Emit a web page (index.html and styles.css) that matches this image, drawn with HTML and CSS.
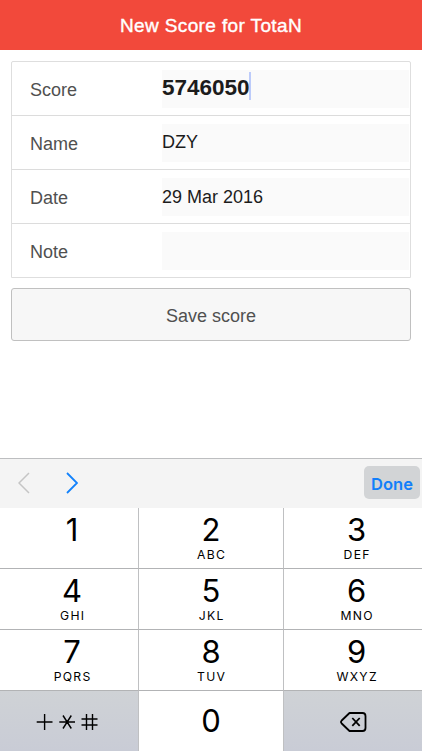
FILE: index.html
```html
<!DOCTYPE html>
<html lang="en">
<head>
<meta charset="utf-8">
<title>New Score for TotaN</title>
<link rel="stylesheet" href="styles.css">
</head>
<body>
<header class="header"><h1>New Score for TotaN</h1></header>
<main class="content">
  <div class="form">
    <div class="row"><span class="label">Score</span><div class="field score"><span>5746050</span><i class="caret"></i></div></div>
    <div class="row"><span class="label">Name</span><div class="field name">DZY</div></div>
    <div class="row"><span class="label">Date</span><div class="field">29 Mar 2016</div></div>
    <div class="row"><span class="label">Note</span><div class="field"></div></div>
  </div>
  <button class="save">Save score</button>
</main>
<section class="keyboard">
  <div class="toolbar">
    <svg class="prev" width="12" height="22" viewBox="0 0 12 22"><path d="M11 1L1 11L11 21"/></svg>
    <svg class="next" width="12" height="22" viewBox="0 0 12 22"><path d="M1 1L11 11L1 21"/></svg>
    <button class="done">Done</button>
  </div>
  <div class="keys">
    <div class="key"><b>1</b></div>
    <div class="key"><b>2</b><small>ABC</small></div>
    <div class="key"><b>3</b><small>DEF</small></div>
    <div class="key"><b>4</b><small>GHI</small></div>
    <div class="key"><b>5</b><small>JKL</small></div>
    <div class="key"><b>6</b><small>MNO</small></div>
    <div class="key"><b>7</b><small>PQRS</small></div>
    <div class="key"><b>8</b><small>TUV</small></div>
    <div class="key"><b>9</b><small>WXYZ</small></div>
    <div class="key gray symbols">
      <svg width="62" height="18" viewBox="0 0 62 18"><path d="M.7 9H16.500M8.600 1V17M23.300 9H39M27 2.500L35.300 15.500M35.300 2.500L27 15.500M45.500 6H61.500M45.500 12H61.500M50.500 1V17M56.500 1V17"/></svg>
    </div>
    <div class="key zero"><b>0</b></div>
    <div class="key gray erase">
      <svg width="27" height="20" viewBox="0 0 27 20"><path d="M9.500 1H22.500Q25.500 1 25.500 4V16Q25.500 19 22.500 19H9.500L1.700 11.500Q.3 10 1.700 8.500ZM12.300 6L19.700 13.800M19.700 6L12.300 13.800"/></svg>
    </div>
  </div>
</section>
</body>
</html>
```
FILE: styles.css
```css
* { box-sizing: border-box; }
body {
  margin: 0;
  height: 751px;
  display: flex;
  flex-direction: column;
  overflow: hidden;
  background: #fff;
  font-family: "Liberation Sans", Arial, sans-serif;
  font-size: 18px;
}
.header {
  height: 50px;
  display: flex;
  justify-content: center;
  background: #f2493b;
  color: #fff;
}
.header h1 {
  margin: 0;
  font-size: 19px;
  line-height: 51px;
  font-weight: 400;
  letter-spacing: .38px;
  -webkit-text-stroke: .4px #fff;
}
.content { padding: 11px 11px 0; flex: 1; }
.form {
  border: 1px solid #dedede;
  border-radius: 2px 2px 0 0;
}
.row {
  height: 54px;
  display: flex;
  padding: 8px 1px 0 18px;
  border-bottom: 1px solid #dcdcdc;
}
.form .row:last-child { height: 53px; border-bottom: 0; }
.label {
  width: 132px;
  line-height: 40px;
  color: #505050;
}
.field {
  flex: 1;
  height: 38px;
  display: flex;
  background: #fafafa;
  color: #1c1c1c;
  line-height: 38px;
}
.name { line-height: 36px; }
.score {
  font-size: 22.500px;
  font-weight: 700;
  line-height: 35px;
}
.caret { width: 2px; height: 28px; margin: 2px 0 0 -1px; background: #bccbfa; }
.save {
  display: block;
  width: 100%;
  height: 53px;
  margin-top: 10px;
  padding: 3px 0 0;
  border: 1px solid #c0c0c0;
  border-radius: 3px;
  background: #f7f7f7;
  color: #505050;
  font: 18px "Liberation Sans", Arial, sans-serif;
}
.keyboard { font-family: Inter, sans-serif; }
.toolbar {
  height: 50px;
  display: flex;
  align-items: center;
  padding: 0 2px 2px 18px;
  border-top: 1px solid #bdbec0;
  background: #f4f4f4;
}
.toolbar svg { fill: none; stroke: #c5c5c5; stroke-width: 1.500; }
.toolbar .next { margin-left: 36px; stroke: #1382fc; stroke-width: 1.800; }
.done {
  width: 56px;
  height: 33px;
  margin-left: auto;
  padding: 3px 0 0;
  border: 0;
  border-radius: 5px;
  background: #d2d4d6;
  color: #127ffa;
  font: 600 16.500px Inter, sans-serif;
}
.keys {
  display: grid;
  grid-template-columns: 139px 145px 138px;
  grid-template-rows: 61px 61px 61px 60px;
}
.key {
  display: flex;
  flex-direction: column;
  align-items: center;
  padding-top: 3px;
  border-right: 1px solid #bfc0c2;
  border-bottom: 1px solid #b2b3b5;
  color: #000;
}
.key:nth-child(3n) { border-right: 0; padding-left: 7px; }
.key:nth-child(3n+1) { padding-left: 6px; }
.key:nth-child(n+10) { border-bottom: 0; }
.key b { font-size: 31px; line-height: 37px; font-weight: 400; }
.key small {
  margin-top: 1px;
  font-size: 12.200px;
  line-height: 12px;
  letter-spacing: 1.300px;
  margin-right: -1.300px;
}
.key.zero { padding-top: 11px; }
.key.gray { background: linear-gradient(#cfd2d6, #c9ccd6); padding-top: 22px; }
.key.symbols { padding-left: 0; padding-right: 5px; }
.key.erase { padding-left: 1px; padding-top: 21px; }
.gray svg { fill: none; stroke: #000; stroke-width: 1.400; }
.erase svg { stroke-width: 1.800; stroke-linejoin: round; }
```
